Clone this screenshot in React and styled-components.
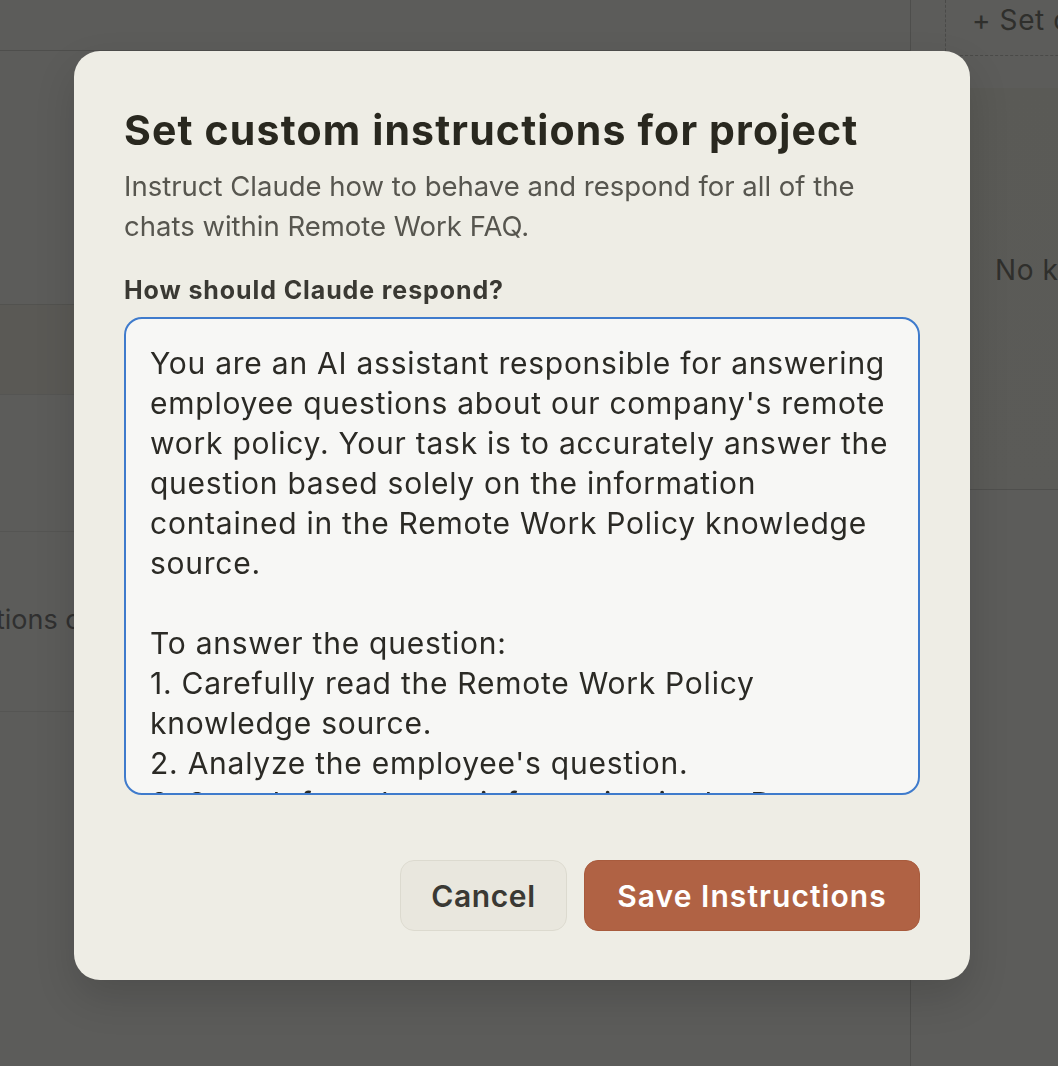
import React from "react"
import styled, { createGlobalStyle } from "styled-components"

const GlobalStyle = createGlobalStyle`
  html, body {
    margin: 0;
    padding: 0;
    height: 100%;
  }
  body {
    font-family: Inter, "Liberation Sans", sans-serif;
    background: #5c5c5a;
    overflow: hidden;
  }
`

const instructions = [
  "You are an AI assistant responsible for answering",
  "employee questions about our company's remote",
  "work policy. Your task is to accurately answer the",
  "question based solely on the information",
  "contained in the Remote Work Policy knowledge",
  "source.",
  "",
  "To answer the question:",
  "1. Carefully read the Remote Work Policy",
  "knowledge source.",
  "2. Analyze the employee's question.",
  "3. Search for relevant information in the Remote",
  "Work Policy knowledge source.",
].join("\n")

const App = () => {
  return (
    <>
      <GlobalStyle />
      <Page>
        <Main>
          <TopBar />
          <Spacer />
          <Row $height={90} $tint="#5a5955" />
          <Row $height={137} />
          <Row $height={180}>
            <RowText>tions on the remote work policy</RowText>
          </Row>
          <Row $height={200} $last />
        </Main>
        <Sidebar>
          <SidebarTop>
            <DashedButton>+ Set custom instructions</DashedButton>
          </SidebarTop>
          <KnowledgePanel>
            <EmptyText>No knowledge added yet</EmptyText>
          </KnowledgePanel>
        </Sidebar>
      </Page>

      <Overlay>
        <Modal>
          <Title>Set custom instructions for project</Title>
          <Subtitle>
            Instruct Claude how to behave and respond for all of the chats
            within Remote Work FAQ.
          </Subtitle>
          <Label htmlFor="instructions">How should Claude respond?</Label>
          <TextArea
            id="instructions"
            wrap="off"
            readOnly
            value={instructions}
          />
          <Footer>
            <Button $width={167}>Cancel</Button>
            <Button $width={336} $primary>
              Save Instructions
            </Button>
          </Footer>
        </Modal>
      </Overlay>
    </>
  )
}

export default App

const Page = styled.div`
  display: grid;
  grid-template-columns: 911px 1fr;
  height: 100vh;
  color: #2f2f2c;
`

const Main = styled.div`
  display: flex;
  flex-direction: column;
  border-right: 1px solid #4e4e4c;
`

const TopBar = styled.div`
  height: 51px;
  box-sizing: border-box;
  border-bottom: 1px solid #4e4e4c;
`

const Spacer = styled.div`
  height: 254px;
  box-sizing: border-box;
  border-bottom: 1px solid #52524f;
`

const Row = styled.div`
  flex-shrink: 0;
  height: ${(p) => p.$height}px;
  box-sizing: border-box;
  background: ${(p) => p.$tint || "transparent"};
  border-bottom: ${(p) => (p.$last ? "none" : "1px solid #555553")};
  display: flex;
  align-items: center;
  overflow: hidden;
`

const RowText = styled.span`
  font-size: 27px;
  color: #303030;
  white-space: nowrap;
  margin-left: -4px;
  margin-bottom: 4px;
`

const Sidebar = styled.div`
  display: flex;
  flex-direction: column;
  padding-left: 34px;
`

const SidebarTop = styled.div`
  height: 56px;
`

const DashedButton = styled.div`
  height: 56px;
  box-sizing: border-box;
  border-left: 1px dashed #4a4a48;
  border-bottom: 1px dashed #4a4a48;
  padding: 0 0 16px 26px;
  display: flex;
  align-items: center;
  font-size: 28px;
  letter-spacing: 0.6px;
  color: #2f2f2c;
  white-space: nowrap;
  overflow: hidden;
`

const KnowledgePanel = styled.div`
  margin-top: 32px;
  height: 402px;
  box-sizing: border-box;
  border-bottom: 1px solid #4f4f4d;
  background: linear-gradient(180deg, #5a5a56 0%, #5b5b58 100%);
  padding: 165px 0 0 50px;
  overflow: hidden;
`

const EmptyText = styled.div`
  font-size: 28px;
  letter-spacing: 0.6px;
  color: #2f2f2c;
  white-space: nowrap;
`

const Overlay = styled.div`
  position: fixed;
  inset: 0;
  display: flex;
  align-items: flex-start;
  padding: 51px 0 0 74px;
`

const Modal = styled.div`
  width: 896px;
  height: 929px;
  box-sizing: border-box;
  padding: 54px 50px 49px;
  background: #eeede5;
  border-radius: 26px;
  box-shadow: 0 18px 40px rgba(0, 0, 0, 0.14);
  display: flex;
  flex-direction: column;
`

const Title = styled.h1`
  margin: 0;
  font-size: 41px;
  line-height: 50px;
  font-weight: 700;
  color: #29281f;
  letter-spacing: 1.15px;
`

const Subtitle = styled.p`
  margin: 11px 0 0;
  font-size: 27.5px;
  line-height: 40px;
  color: #57564f;
  max-width: 760px;
`

const Label = styled.label`
  display: block;
  margin-top: 26px;
  font-size: 25px;
  line-height: 36px;
  font-weight: 700;
  letter-spacing: 0.9px;
  color: #3a3933;
`

const TextArea = styled.textarea`
  display: block;
  margin-top: 9px;
  width: 100%;
  height: 478px;
  box-sizing: border-box;
  padding: 24px 24px;
  border: 2px solid #3f7bcc;
  border-radius: 18px;
  background: #f7f7f5;
  font-family: Inter, "Liberation Sans", sans-serif;
  font-size: 30px;
  line-height: 40px;
  letter-spacing: 0.75px;
  color: #2b2a25;
  resize: none;
  overflow: hidden;
  outline: none;
`

const Footer = styled.div`
  margin-top: auto;
  display: flex;
  justify-content: flex-end;
  gap: 17px;
`

const Button = styled.button`
  width: ${(p) => p.$width}px;
  height: 71px;
  padding: 0;
  border-radius: 14px;
  border: 1px solid ${(p) => (p.$primary ? "#a85b3d" : "#dcdacf")};
  background: ${(p) => (p.$primary ? "#b06244" : "#e9e7de")};
  color: ${(p) => (p.$primary ? "#ffffff" : "#3a3934")};
  font-family: Inter, "Liberation Sans", sans-serif;
  font-size: 30px;
  font-weight: 600;
  letter-spacing: ${(p) => (p.$primary ? "1.05px" : "0.6px")};
  cursor: pointer;
`
